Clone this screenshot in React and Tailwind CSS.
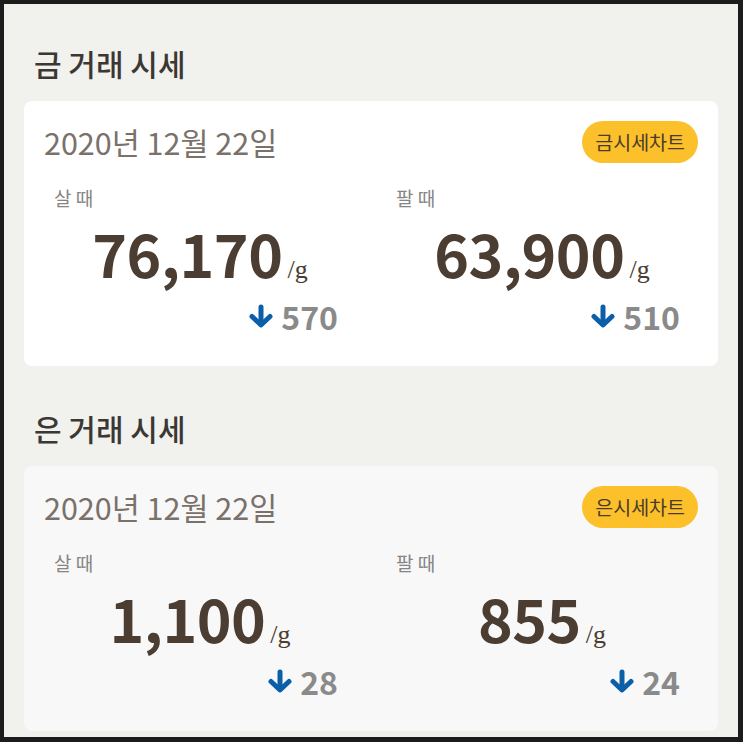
import React from "react";

const FONT = { fontFamily: '"Noto Sans CJK KR", "Noto Sans", sans-serif' };

const DownArrow = () => (
  <svg width="26" height="24" viewBox="0 0 26 24" fill="none" stroke="#0b5ea8" strokeWidth="5" strokeLinecap="round" strokeLinejoin="round">
    <path d="M13 3v17" />
    <path d="M4 12.5l9 8.5 9-8.5" />
  </svg>
);

const PriceCol = ({ label, price, diff, className }) => (
  <div className={`w-[292px] ${className}`}>
    <div className="text-[19px] leading-[24px] text-[#858585]">{label}</div>
    <div className="flex justify-center items-baseline mt-[13px] h-[60px]">
      <span className="text-[59px] leading-none font-bold text-[#4b3d31] tracking-[-0.5px]">{price}</span>
      <span className="text-[26px] leading-none ml-[5px] text-[#4b3d31]" style={{ fontFamily: '"Liberation Serif", serif' }}>
        /g
      </span>
    </div>
    <div className="flex justify-end items-center gap-[7px] mt-[17px] pr-[8px] h-[32px]">
      <DownArrow />
      <span className="text-[32px] leading-none font-bold text-[#8a8a8a]">{diff}</span>
    </div>
  </div>
);

const Section = ({ title, badge, buy, sell, cardBg, className }) => (
  <section className={className}>
    <h2 className="text-[30px] leading-[36px] font-medium text-[#3b3833] pl-[10px]">{title}</h2>
    <div className={`mt-[20px] rounded-[8px] ${cardBg} pt-[20px] pb-[34px]`}>
      <div className="flex justify-between items-center pl-[20px] pr-[20px]">
        <div className="text-[30.5px] leading-[40px] text-[#7a716a]">2020년 12월 22일</div>
        <div className="h-[42px] px-[13px] rounded-full bg-[#fcc02a] text-[19.5px] text-[#4a3b2b] flex items-center">{badge}</div>
      </div>
      <div className="flex mt-[23px] pl-[30px]">
        <PriceCol {...buy} label="살 때" />
        <PriceCol {...sell} label="팔 때" className="ml-[50px]" />
      </div>
    </div>
  </section>
);

export default function App() {
  return (
    <div style={FONT} className="w-[743px] h-[742px] bg-[#1c1c1c] pt-[4px] pl-[4px] pr-[5px] pb-[5px]">
      <div className="h-full bg-[#f1f1ee] px-[20px] pt-[41px] overflow-hidden">
        <Section
          title="금 거래 시세"
          badge="금시세차트"
          cardBg="bg-white"
          buy={{ price: "76,170", diff: "570" }}
          sell={{ price: "63,900", diff: "510" }}
        />
        <Section
          title="은 거래 시세"
          badge="은시세차트"
          cardBg="bg-[#f8f8f8]"
          className="mt-[44px]"
          buy={{ price: "1,100", diff: "28" }}
          sell={{ price: "855", diff: "24" }}
        />
      </div>
    </div>
  );
}
